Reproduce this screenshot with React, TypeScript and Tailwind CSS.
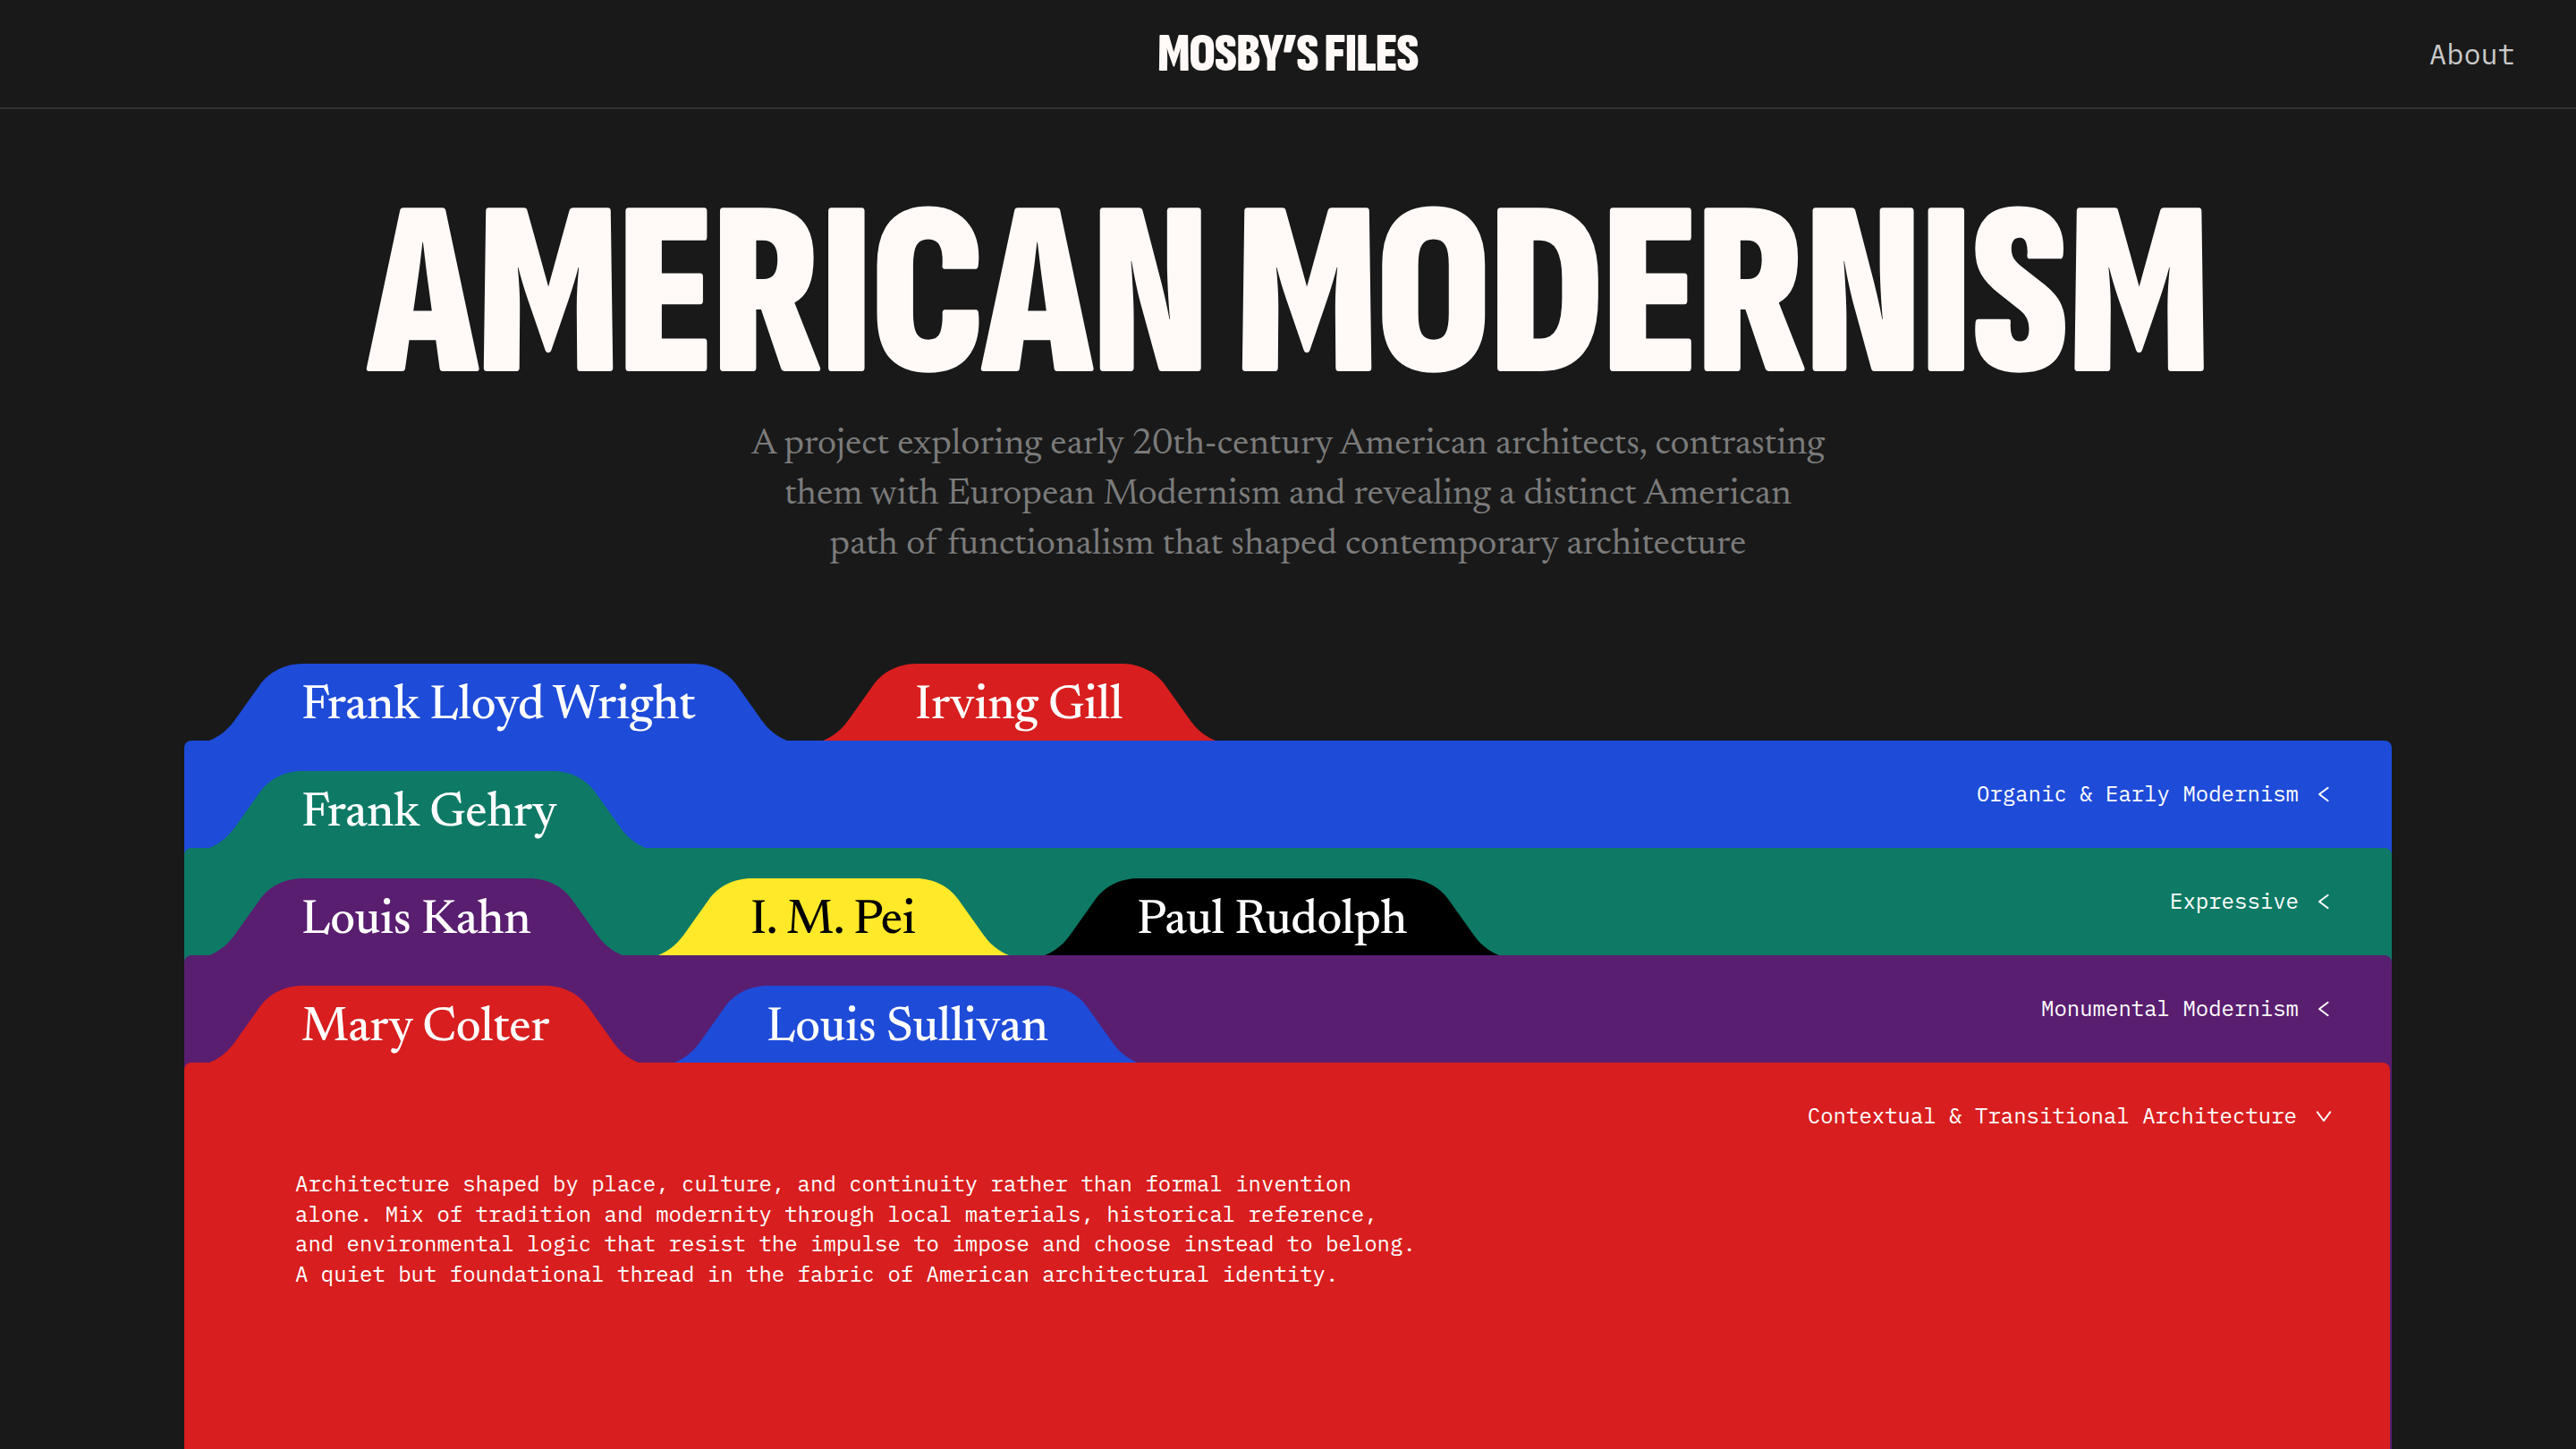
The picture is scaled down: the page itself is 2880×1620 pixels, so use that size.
import React from 'react';

interface Tab {
  name: string;
  width: number;
  fill: string;
  text: string;
}

interface Folder {
  label: string;
  bg: string;
  tabs: Tab[];
  description?: string[];
}

const folders: Folder[] = [
  {
    label: 'Organic & Early Modernism',
    bg: 'bg-[#1e4bd8]',
    tabs: [
      { name: 'Frank Lloyd Wright', width: 646, fill: 'text-[#1e4bd8]', text: 'text-white' },
      { name: 'Irving Gill', width: 439, fill: 'text-[#d81e1e]', text: 'text-white' },
    ],
  },
  {
    label: 'Expressive',
    bg: 'bg-[#0e7a65]',
    tabs: [{ name: 'Frank Gehry', width: 488, fill: 'text-[#0e7a65]', text: 'text-white' }],
  },
  {
    label: 'Monumental Modernism',
    bg: 'bg-[#591e70]',
    tabs: [
      { name: 'Louis Kahn', width: 462, fill: 'text-[#591e70]', text: 'text-white' },
      { name: 'I. M. Pei', width: 392, fill: 'text-[#ffe928]', text: 'text-black' },
      { name: 'Paul Rudolph', width: 508, fill: 'text-black', text: 'text-white' },
    ],
  },
  {
    label: 'Contextual & Transitional Architecture',
    bg: 'bg-[#d81e1e]',
    tabs: [
      { name: 'Mary Colter', width: 480, fill: 'text-[#d81e1e]', text: 'text-white' },
      { name: 'Louis Sullivan', width: 518, fill: 'text-[#1e4bd8]', text: 'text-white' },
    ],
    description: [
      'Architecture shaped by place, culture, and continuity rather than formal invention',
      'alone. Mix of tradition and modernity through local materials, historical reference,',
      'and environmental logic that resist the impulse to impose and choose instead to belong.',
      'A quiet but foundational thread in the fabric of American architectural identity.',
    ],
  },
];

// Sloped shoulder of a folder tab, mirrored for the right side
const Shoulder = ({ flip = false }: { flip?: boolean }) => (
  <svg
    width="104"
    height="86"
    viewBox="0 0 104 86"
    fill="currentColor"
    className={flip ? 'shrink-0 -scale-x-100' : 'shrink-0'}
  >
    <path d="M0 86C11 82 22 73 30 61L57 23C67 9 85 0 104 0V86Z" />
  </svg>
);

const Chevron = ({ open }: { open: boolean }) => (
  <svg
    width="24"
    height="24"
    viewBox="0 0 24 24"
    fill="none"
    stroke="currentColor"
    strokeWidth="2"
    strokeLinecap="round"
    strokeLinejoin="round"
    className={open ? 'mt-0.5' : 'mt-0.5 rotate-90'}
  >
    <path d="M4.8 7.4L12 17L19.2 7.4" />
  </svg>
);

const FolderTab = ({ tab }: { tab: Tab }) => (
  <button className={`flex h-[86px] ${tab.fill}`} style={{ width: tab.width }}>
    <Shoulder />
    <span className="flex h-full min-w-0 flex-1 items-center bg-current pt-2.5">
      <span
        className={`relative z-10 -ml-px whitespace-nowrap font-['Newsreader','Liberation_Serif',serif] text-[54.4px] leading-[74px] font-medium tracking-[-0.3px] ${tab.text}`}
      >
        {tab.name}
      </span>
    </span>
    <Shoulder flip />
  </button>
);

const FolderRow = ({ folder, first }: { folder: Folder; first: boolean }) => {
  const open = Boolean(folder.description);
  return (
    <section className={first ? 'relative' : 'relative -mt-[866px]'}>
      <div className="flex gap-10 pl-7">
        {folder.tabs.map((tab) => (
          <FolderTab key={tab.name} tab={tab} />
        ))}
      </div>
      <div
        className={`h-[900px] rounded-t-lg font-['IBM_Plex_Mono','Liberation_Mono',monospace] text-2xl font-normal text-white ${folder.bg} ${open ? 'mr-0.5' : ''}`}
      >
        <div className={`flex h-[118px] items-center justify-end ${open ? 'gap-[18px] pr-[62px]' : 'gap-4 pr-16'}`}>
          <span>{folder.label}</span>
          <Chevron open={open} />
        </div>
        {folder.description && (
          <p className="pt-px pl-31 leading-[33.6px]">
            {folder.description.map((line) => (
              <span key={line} className="block whitespace-nowrap">
                {line}
              </span>
            ))}
          </p>
        )}
      </div>
    </section>
  );
};

export default function App() {
  return (
    <div className="flex h-[1620px] flex-col overflow-hidden bg-[#191919]">
      <header className="grid h-[122px] shrink-0 grid-cols-3 items-center border-b-2 border-[#323232] px-[68px]">
        <span />
        <span className="pt-0.5 text-center font-['Sofia_Sans_Extra_Condensed','Roboto_Condensed','Roboto',sans-serif] text-[62px] leading-[76px] font-black tracking-[-0.9px] text-[#fffaf7]">
          MOSBY’S FILES
        </span>
        <a className="text-right font-['IBM_Plex_Mono','Liberation_Mono',monospace] text-[32px] text-[#c9c9c9]">About</a>
      </header>

      <main className="px-[206px] pt-[110px]">
        <h1 className="flex origin-center scale-x-98 justify-center pr-0.5 font-['Sofia_Sans_Extra_Condensed','Roboto_Condensed','Roboto',sans-serif] text-[279px] leading-[200px] font-black tracking-[-2.5px] whitespace-nowrap text-[#fffaf7]">
          AMERICAN MODERNISM
        </h1>
        <p className="mt-[37px] text-center font-['Newsreader','Liberation_Serif',serif] text-[41.75px] leading-[56px] font-[450] text-[#7b7b7b]">
          A project exploring early 20th-century American architects, contrasting
          <br />
          them with European Modernism and revealing a distinct American
          <br />
          path of functionalism that shaped contemporary architecture
        </p>

        <div className="mt-[105px]">
          {folders.map((folder, i) => (
            <FolderRow key={folder.label} folder={folder} first={i === 0} />
          ))}
        </div>
      </main>
    </div>
  );
}
